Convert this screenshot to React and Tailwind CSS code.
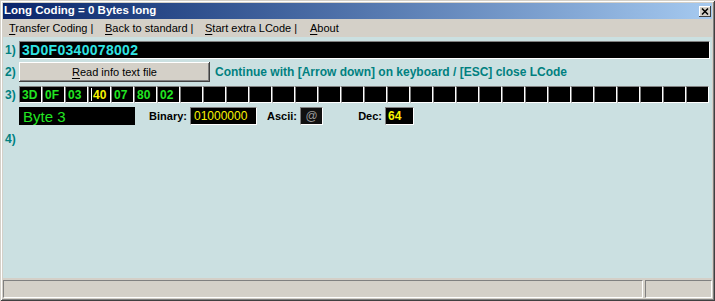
const cells = ["3D", "0F", "03", "40", "07", "80", "02"];
const CELL_COUNT = 30;

const sunken = "border border-t-[#808080] border-l-[#808080] border-b-white border-r-white";

const MenuItem = ({ first, rest, width }) => (
  <div className={width}>
    <span className="underline underline-offset-2">{first}</span>
    {rest}
  </div>
);

const Label = ({ children }) => (
  <div className="w-[16px] pl-[2px] text-[12px] font-bold text-[#008080] leading-none">
    {children}
  </div>
);

const App = () => {
  const slots = Array.from({ length: CELL_COUNT }, (_, i) => cells[i] ?? "");

  return (
    <div className="w-[715px] h-[301px] p-[3px] bg-[#d4d0c8] flex flex-col font-['Liberation_Sans',Arial,sans-serif] shadow-[inset_1px_1px_0_#d4d0c8,inset_-1px_-1px_0_#404040,inset_2px_2px_0_#ffffff,inset_-2px_-2px_0_#808080]">
      {/* Title bar */}
      <div className="h-[16px] flex items-center justify-between bg-gradient-to-r from-[#0a246a] to-[#a6caf0]">
        <span className="pl-[1px] text-white font-bold text-[11.5px] leading-none">
          Long Coding = 0 Bytes long
        </span>
        <div className="w-[12px] h-[11px] mr-[1px] bg-[#d4d0c8] flex items-center justify-center shadow-[inset_-1px_-1px_0_#404040,inset_1px_1px_0_#ffffff]">
          <svg width="8" height="7" viewBox="0 0 8 7">
            <path d="M1 0.5 L7 6.5 M7 0.5 L1 6.5" stroke="#000" strokeWidth="1.5" />
          </svg>
        </div>
      </div>

      {/* Menu */}
      <div className="h-[18px] flex items-center pl-[6px] text-[11px] text-black leading-none">
        <MenuItem first="T" rest="ransfer Coding |" width="w-[96px]" />
        <MenuItem first="B" rest="ack to standard |" width="w-[100px]" />
        <MenuItem first="S" rest="tart extra LCode |" width="w-[105px]" />
        <MenuItem first="A" rest="bout" width="w-[40px]" />
      </div>

      {/* Main panel */}
      <div className="flex-1 bg-[#cbe0e1] pr-[2px] flex flex-col">
        <div className="mt-[4px] h-[18px] flex items-center">
          <Label>1)</Label>
          <div className={`flex-1 h-full bg-black flex items-center pl-[2px] ${sunken}`}>
            <span className="text-[14px] font-bold text-[#30e4e4] tracking-[0.3px] leading-none">
              3D0F0340078002
            </span>
          </div>
        </div>

        <div className="mt-[3px] h-[20px] flex items-center">
          <Label>2)</Label>
          <div className="w-[191px] h-full bg-[#d4d0c8] flex items-center justify-center text-[11px] text-black shadow-[inset_-1px_-1px_0_#404040,inset_1px_1px_0_#ffffff,inset_-2px_-2px_0_#808080]">
            <span>
              <span className="underline underline-offset-2">R</span>ead info text file
            </span>
          </div>
          <span className="ml-[5px] text-[12px] font-bold text-[#008080]">
            Continue with [Arrow down] on keyboard / [ESC] close LCode
          </span>
        </div>

        <div className="mt-[4px] h-[17px] flex items-center">
          <Label>3)</Label>
          <div className="flex">
            {slots.map((v, i) => (
              <div
                key={i}
                className={`w-[23px] h-[17px] bg-black flex items-center pl-[2px] text-[12px] font-bold leading-none ${sunken} ${
                  i === 3 ? "text-[#f8f400]" : "text-[#22e622]"
                }`}
              >
                {i === 3 && <span className="w-px h-[13px] bg-white mr-[1px]" />}
                {v}
              </div>
            ))}
          </div>
        </div>

        <div className="mt-[4px] h-[18px] flex items-center text-[11px] font-bold text-black">
          <div className="w-[16px]" />
          <div className="w-[116px] h-full bg-black flex items-center pl-[4px]">
            <span className="text-[15px] font-normal text-[#22e622] leading-none">Byte 3</span>
          </div>
          <span className="w-[55px] text-right pr-[3px]">Binary:</span>
          <div className={`w-[67px] h-full bg-black flex items-center pl-[3px] ${sunken}`}>
            <span className="text-[12px] font-normal text-[#f8f400] leading-none">01000000</span>
          </div>
          <span className="w-[43px] text-right pr-[3px]">Ascii:</span>
          <div className={`w-[23px] h-full bg-[#111] flex items-center justify-center ${sunken}`}>
            <span className="text-[12px] font-normal text-[#9a9a9a] leading-none">@</span>
          </div>
          <span className="w-[62px] text-right pr-[3px]">Dec:</span>
          <div className={`w-[29px] h-full bg-black flex items-center pl-[2px] ${sunken}`}>
            <span className="text-[12px] text-[#f8f400] leading-none">64</span>
          </div>
        </div>

        <div className="mt-[8px] flex items-center">
          <Label>4)</Label>
        </div>
      </div>

      {/* Status bar */}
      <div className="h-[20px] pt-[2px] flex gap-[2px]">
        <div className={`w-[640px] h-[18px] ${sunken}`} />
        <div className={`flex-1 h-[18px] ${sunken}`} />
      </div>
    </div>
  );
};

export default App;
